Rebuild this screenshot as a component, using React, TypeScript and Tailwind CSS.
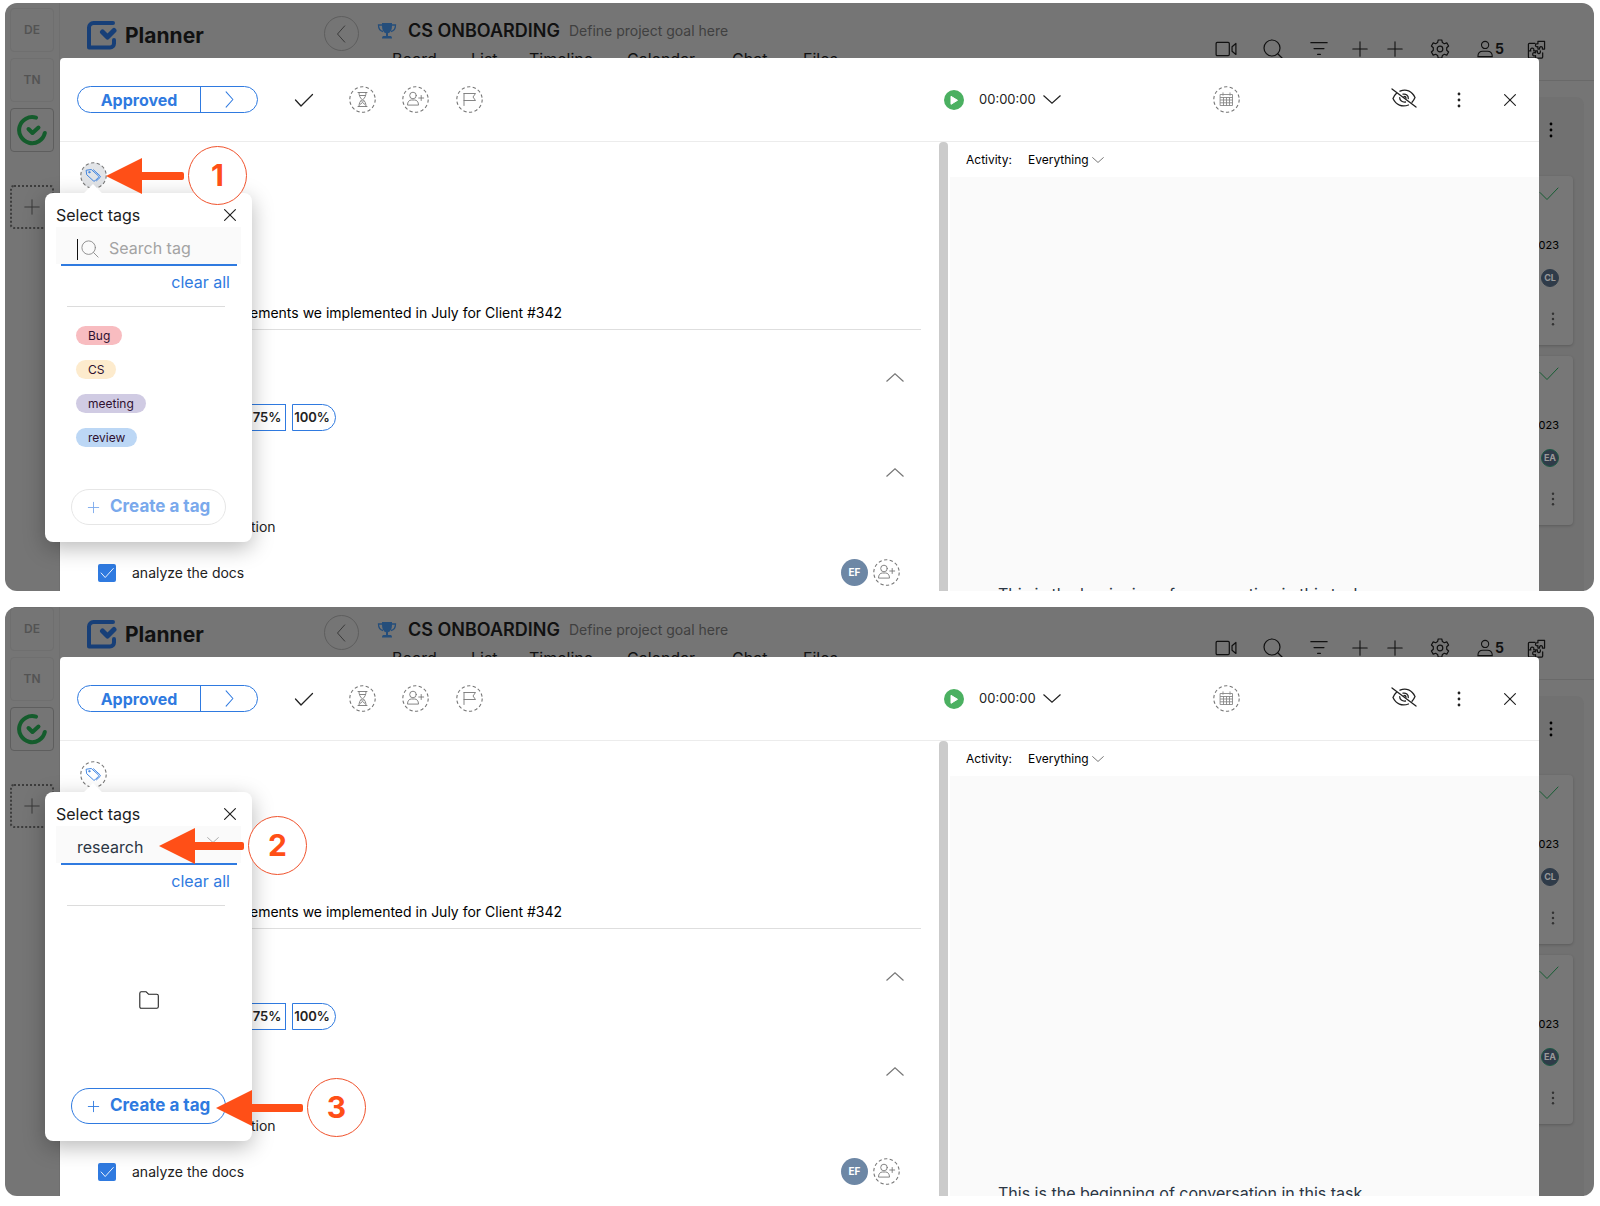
import { useId, useState } from "react";
import type { ReactNode } from "react";

type Tag = { name: string; color: string };

const TAGS: Tag[] = [
  { name: "Bug", color: "bg-[#f8bcc0]" },
  { name: "CS", color: "bg-[#fdebcd]" },
  { name: "meeting", color: "bg-[#d0cbe3]" },
  { name: "review", color: "bg-[#bcd7f5]" },
];

const TABS = [
  { name: "Board", width: "w-[79px]" },
  { name: "List", width: "w-[58px]" },
  { name: "Timeline", width: "w-[98px]" },
  { name: "Calendar", width: "w-[105px]" },
  { name: "Chat", width: "w-[71px]" },
  { name: "Files", width: "w-[50px]" },
];

function Icon({
  size = 20,
  stroke = 1,
  className = "",
  children,
}: {
  size?: number;
  stroke?: number;
  className?: string;
  children: ReactNode;
}) {
  return (
    <svg
      width={size}
      height={size}
      viewBox="0 0 20 20"
      fill="none"
      stroke="currentColor"
      strokeWidth={stroke}
      strokeLinecap="round"
      strokeLinejoin="round"
      className={`shrink-0 ${className}`}
      aria-hidden="true"
    >
      {children}
    </svg>
  );
}

const closePath = <path d="M4 4l12 12M16 4L4 16" />;
const plusPath = <path d="M10 2v16M2 10h16" />;

function Dots({ className }: { className: string }) {
  return (
    <svg width="4" height="16" viewBox="0 0 4 16" fill="currentColor" className={className} aria-hidden="true">
      <circle cx="2" cy="2" r="1.4" />
      <circle cx="2" cy="8" r="1.4" />
      <circle cx="2" cy="14" r="1.4" />
    </svg>
  );
}

function Chevron({
  dir,
  width,
  className = "",
}: {
  dir: "up" | "down";
  width: number;
  className?: string;
}) {
  return (
    <svg
      width={width}
      height={width / 2}
      viewBox="0 0 18 9"
      fill="none"
      stroke="currentColor"
      strokeWidth="1.2"
      className={`shrink-0 ${className}`}
      aria-hidden="true"
    >
      <path d={dir === "up" ? "M.5 8.5L9 .8l8.500 7.700" : "M.5.5L9 8.200 17.500.5"} />
    </svg>
  );
}

function DashedCircle({
  label,
  className = "",
  filled = false,
  children,
}: {
  label: string;
  className?: string;
  filled?: boolean;
  children: ReactNode;
}) {
  return (
    <button type="button" aria-label={label} className={`block size-[27px] shrink-0 ${className}`}>
      <svg width="27" height="27" viewBox="0 0 27 27" fill="none" stroke="currentColor" aria-hidden="true">
        <circle
          cx="13.5"
          cy="13.5"
          r="12.700"
          fill={filled ? "#e2e4e7" : "none"}
          stroke="#777"
          strokeWidth="1.1"
          strokeDasharray="3.300 2.400"
        />
        <g strokeWidth="0.9" strokeLinejoin="round" strokeLinecap="round">
          {children}
        </g>
      </svg>
    </button>
  );
}

const personPlus = (
  <>
    <circle cx="11" cy="9.500" r="3.300" />
    <path d="M5.500 18.700c0-3 1.700-4.700 4-4.700h3c2.300 0 4 1.700 4 4.700z" />
    <path d="M19.200 9.500v5M16.700 12h5" />
  </>
);

function RailBox({ children, active }: { children: ReactNode; active?: boolean }) {
  return (
    <div
      className={`flex h-11 w-11 items-center justify-center rounded border text-xs font-semibold text-[#535353] ${
        active ? "border-[#5e5e5e]" : "border-[#6f6f6f]"
      }`}
    >
      {children}
    </div>
  );
}

function Rail() {
  return (
    <aside className="flex w-[55px] shrink-0 flex-col items-center gap-[6px] border-r border-[#6f6f6f] pt-[5px]">
      <RailBox>DE</RailBox>
      <RailBox>TN</RailBox>
      <RailBox active>
        <svg width="32" height="32" viewBox="0 0 32 32" fill="none" stroke="#145c2c" strokeWidth="4" strokeLinecap="round" strokeLinejoin="round">
          <path d="M20 3.700A13 13 0 1 0 28.800 19" />
          <path d="M12.500 15l4 4 6-5.500" />
        </svg>
      </RailBox>
      <button
        type="button"
        aria-label="Add workspace"
        className="mt-[27px] flex h-11 w-11 items-center justify-center rounded-sm border-2 border-dotted border-[#3d3d3d] text-[#333]"
      >
        <Icon size={18}>{plusPath}</Icon>
      </button>
    </aside>
  );
}

function ProjectHeader() {
  return (
    <header className="flex h-[78px] border-b border-[#696969] text-[#111]">
      <div className="flex w-[257px] items-start gap-2 pt-[17px] pl-[26px]">
        <svg width="31" height="31" viewBox="0 0 31 31" fill="none" stroke="#173f78" strokeWidth="4" strokeLinecap="round" strokeLinejoin="round" className="shrink-0">
          <path d="M27 3H7.500A4.500 4.500 0 0 0 3 7.500V27.500h21a4 4 0 0 0 4-4V20" />
          <path d="M16.500 12l5 5L28 10.500" strokeWidth="5" />
        </svg>
        <span className="text-[21px] leading-8 font-bold">Planner</span>
      </div>
      <button
        type="button"
        aria-label="Back"
        className="mt-[13px] ml-[7px] flex size-[35px] items-center justify-center rounded-full border border-[#5e5e5e] text-[#333]"
      >
        <Icon size={18}>
          <path d="M13 1L5 10l8 9" />
        </Icon>
      </button>
      <div className="ml-4 pt-4">
        <div className="flex items-center">
          <svg width="20" height="18" viewBox="0 0 20 18" fill="#254e7b" className="mr-[11px] ml-[2px]">
            <path d="M5 1h10v3c0 4-1.500 6.500-4 7.300V14h2.500c1 0 1.500 1 1.500 2.500H5C5 15 5.500 14 6.500 14H9v-2.700C6.500 10.500 5 8 5 4z" />
            <path d="M5 3H1.500c0 4 1.700 6 4.500 6.500M15 3h3.500c0 4-1.700 6-4.500 6.500" fill="none" stroke="#254e7b" strokeWidth="1.3" />
          </svg>
          <h1 className="text-lg leading-6 font-semibold whitespace-nowrap">CS ONBOARDING</h1>
          <span className="ml-[9px] text-sm leading-6 text-[#404040]">Define project goal here</span>
        </div>
        <nav className="mt-1 flex pl-[17px]">
          {TABS.map((tab) => (
            <a key={tab.name} href={`#${tab.name}`} className={`text-base leading-6 ${tab.width}`}>
              {tab.name}
            </a>
          ))}
        </nav>
      </div>
      <div className="mt-[35px] mr-12 ml-auto flex h-[22px] items-center">
        <Icon size={22} stroke={1.1} className="mr-[26px]">
          <rect x="1" y="4" width="12" height="12" rx="1" />
          <path d="M15.500 8l3.500-3v10l-3.500-3z" />
        </Icon>
        <Icon size={20} stroke={1.2} className="mr-[27px]">
          <circle cx="9" cy="9" r="8" />
          <path d="M15 15l4.500 4.500" />
        </Icon>
        <Icon size={18} stroke={1.4} className="mr-[23px]">
          <path d="M1 3h18M4.500 9.500h11M8.500 16h3" />
        </Icon>
        <Icon size={18} stroke={1.2} className="mr-[17px]">{plusPath}</Icon>
        <Icon size={18} stroke={1.2} className="mr-[26px]">{plusPath}</Icon>
        <Icon size={20} stroke={1.2} className="mr-[27px]">
          <path d="M8.200 1h3.600l.6 2.600 1.900 1.100 2.500-.8 1.800 3.100-1.900 1.800v2.400l1.900 1.800-1.800 3.100-2.500-.8-1.900 1.100-.6 2.600H8.200l-.6-2.600-1.900-1.100-2.500.8-1.800-3.100 1.900-1.800V8.800L1.400 7l1.800-3.100 2.500.8 1.900-1.100z" />
          <circle cx="10" cy="10" r="2.800" />
        </Icon>
        <Icon size={18} stroke={1.2}>
          <circle cx="9" cy="5.500" r="4" />
          <path d="M1 18.500c0-4 2.200-6 5.500-6h5c3.300 0 5.500 2 5.500 6z" />
        </Icon>
        <span className="mr-[23px] text-sm font-bold">5</span>
        <Icon size={19} stroke={1.3}>
          <path d="M8.500 3.500h-6a1 1 0 0 0-1 1v13.500a1 1 0 0 0 1 1h13a1 1 0 0 0 1-1v-4.500M1.500 11.500h2.500c-.8-2 .3-3 1.500-3s2.300 1 1.500 3h2M9 19v-2.500c-2 .8-3-.3-3-1.500s1-2.300 3-1.500v-2M9 11.500h2c-.5 2 .5 2.800 1.500 2.800s2-1 1.500-2.800" />
          <path d="M11.500 1.500h7v8h-2.300c.4-1.700-.5-2.500-1.500-2.500s-1.800 1-1.400 2.500h-1.800V7c-1.800.5-2.600-.3-2.600-1.400s1-2 2.600-1.500z" />
        </Icon>
      </div>
    </header>
  );
}

function BoardCard({ initials, ring }: { initials: string; ring: string }) {
  return (
    <div className="flex h-[169px] flex-col items-end rounded bg-[#777] pt-2 pr-[14px] shadow-[0_1px_3px_rgba(0,0,0,0.2)]">
      <Icon size={20} className="text-[#175c33]">
        <path d="M1 8.500l7 7L19 4" />
      </Icon>
      <span className="mt-[32px] text-[11px] leading-[18px] text-black">023</span>
      <span
        className={`mt-[15px] flex size-[18px] items-center justify-center rounded-full border bg-[#2f3b49] text-[9px] font-bold text-[#999] ${ring}`}
      >
        {initials}
      </span>
      <Dots className="mt-[25px] mr-1 h-[14px] text-[#333]" />
    </div>
  );
}

function TagPopup({ query }: { query: string }) {
  const id = useId();
  const [value, setValue] = useState(query);
  const found = TAGS.filter((t) => t.name.toLowerCase().includes(value.toLowerCase()));
  const empty = value === "";

  return (
    <div className="absolute top-[190px] left-10 flex h-[349px] w-[207px] flex-col rounded-lg bg-white pt-[10px] shadow-[0_6px_22px_rgba(0,0,0,0.28)]">
      <div className="absolute -top-[6px] left-[41px] size-[14px] rotate-45 bg-white" />
      <div className="relative flex h-6 items-center justify-between pr-[13px] pl-[11px]">
        <span className="text-base text-[#1c1c1c]">Select tags</span>
        <button type="button" aria-label="Close tags" className="text-[#222]">
          <Icon size={18} stroke={1.3}>{closePath}</Icon>
        </button>
      </div>
      <div className="relative mr-[11px] ml-[11px] h-[37px] bg-[#fafafa] pr-1 pl-[5px]">
        <label htmlFor={id} className="sr-only">
          Search tag
        </label>
        <input
          id={id}
          value={value}
          placeholder="Search tag"
          onChange={(e) => setValue(e.target.value)}
          className={`h-[39px] w-full border-b-2 border-[#2f7ae0] bg-transparent pt-1 text-base text-[#2b3644] outline-none placeholder:text-[#a3a3a3] ${
            empty ? "pl-12" : "pl-4"
          }`}
        />
        {empty ? (
          <>
            <span className="absolute top-3 left-[21px] h-[21px] w-px bg-[#111]" />
            <Icon size={18} className="absolute top-[13px] left-[25px] text-[#888]">
              <circle cx="8.500" cy="8.500" r="7.500" />
              <path d="M14 14l5 5" />
            </Icon>
          </>
        ) : (
          <Chevron dir="down" width={12} className="absolute top-[11px] right-[22px] text-[#999]" />
        )}
      </div>
      <button type="button" className="mt-[6px] mr-[22px] self-end text-base leading-6 text-[#2f7ae0]">
        clear all
      </button>
      <hr className="mt-3 mr-[27px] ml-[22px] border-[#dcdcdc]" />
      {found.length > 0 ? (
        <ul className="mt-[19px] flex flex-col items-start gap-[15px] pl-[31px]">
          {found.map((tag) => (
            <li key={tag.name} className={`h-[19px] rounded-full px-3 text-xs leading-[19px] text-[#2e1030] ${tag.color}`}>
              {tag.name}
            </li>
          ))}
        </ul>
      ) : (
        <Icon size={20} stroke={1.1} className="mx-auto mt-[84px] text-[#222]">
          <path d="M.8 3.500c0-1 .4-1.700 1.400-1.700h5l2.300 2.400h8.300c1 0 1.500.5 1.500 1.500v11c0 1-.5 1.500-1.500 1.500H2.200c-1 0-1.400-.5-1.400-1.500z" />
        </Icon>
      )}
      <button
        type="button"
        className={`mt-auto mb-[17px] ml-[26px] flex h-9 w-[155px] items-center gap-[10px] rounded-full border pl-[15px] text-[17px] font-bold whitespace-nowrap ${
          empty ? "border-[#e6e6e6] text-[#7aa9ec]" : "border-[#2f7ae0] text-[#2f7ae0]"
        }`}
      >
        <Icon size={13} stroke={1.4}>{plusPath}</Icon>
        Create a tag
      </button>
    </div>
  );
}

function TaskToolbar() {
  return (
    <div className="flex h-[84px] shrink-0 items-center border-b border-[#ececec] pl-[17px]">
      <div className="flex h-[27px] w-[181px] rounded-full border border-[#2f7ae0] text-[#2f7ae0]">
        <button type="button" className="w-[122px] text-base leading-6 font-bold">
          Approved
        </button>
        <button type="button" aria-label="Next status" className="flex flex-1 items-center justify-center border-l border-[#2f7ae0]">
          <Icon size={17} stroke={1.2}>
            <path d="M6 1l8 9-8 9" />
          </Icon>
        </button>
      </div>
      <button type="button" aria-label="Complete" className="ml-[36px] text-[#222]">
        <Icon size={20} stroke={1.3}>
          <path d="M1.500 10l5.500 6L18.500 4.500" />
        </Icon>
      </button>
      <DashedCircle label="Estimate" className="ml-[35px] text-[#777]">
        <path d="M9 6.500h9M9 20.500h9M10 6.500c0 3.500 1 5 3 7-2 2-3 3.500-3 7M17 6.500c0 3.500-1 5-3 7 2 2 3 3.500 3 7M11 9.500h5M12.500 15h2M11 18.500l2.500-2 2.500 2" />
      </DashedCircle>
      <DashedCircle label="Assign" className="ml-[26px] text-[#777]">{personPlus}</DashedCircle>
      <DashedCircle label="Priority" className="ml-[27px] text-[#777]">
        <path d="M8 7.500v12M8 7.500h11.500l-2.500 3.500 2.500 3.500H8" />
      </DashedCircle>

      <div className="ml-auto flex w-[595px] items-center justify-between pr-[20px]">
        <div className="flex items-center">
          <button type="button" aria-label="Start timer">
            <svg width="20" height="20" viewBox="0 0 20 20">
              <circle cx="10" cy="10" r="10" fill="#4bb061" />
              <path d="M7 6.300l6.500 4L7 14.300z" fill="#fff" stroke="#fff" strokeLinejoin="round" />
            </svg>
          </button>
          <span className="mr-2 ml-[15px] w-[56px] text-[13px] text-[#222]">00:00:00</span>
          <Chevron dir="down" width={18} className="text-[#222]" />
        </div>
        <DashedCircle label="Due date" className="text-[#888]">
          <path d="M7.500 8.500h12v11h-12zM7.500 11.500h12M7.500 14h12M7.500 16.800h12M10.500 11.500v8M13.500 11.500v8M16.500 11.500v8M10 6.800v2.500M17 6.800v2.500" />
        </DashedCircle>
        <div className="flex items-center">
          <button type="button" aria-label="Unwatch" className="mb-1">
            <svg width="26" height="20" viewBox="0 0 26 20" fill="none" stroke="#222" strokeWidth="1.300" strokeLinecap="round">
              <path d="M1 1l24 18" />
              <path d="M9 3.200C15 .4 21 3 24 9.500c-.8 2-1.800 3.500-3 4.800M17.500 17C11 19.500 5 17 2 10.500c.8-2 2-3.800 3.500-5.200" />
              <path d="M12 6.200c3-.6 5.500 1.500 5.300 4.300M14.500 14c-3.300.5-5.800-1.500-5.800-4.300M13 8.500c1 0 2 .7 2 1.800" />
            </svg>
          </button>
          <button type="button" aria-label="More" className="mr-10 ml-10">
            <Dots className="text-[#222]" />
          </button>
          <button type="button" aria-label="Close task" className="text-[#222]">
            <Icon size={18} stroke={1.3}>{closePath}</Icon>
          </button>
        </div>
      </div>
    </div>
  );
}

function TaskDetails({ tagActive }: { tagActive: boolean }) {
  const id = useId();
  return (
    <div className="min-w-0 flex-1 pt-5 pr-[18px]">
      <DashedCircle label="Tags" filled={tagActive} className="ml-5 text-[#2f7ae0]">
        <path d="M6.500 8.200l4.800-.7 7 6.300c.6.6.6 1.200 0 1.700l-3.300 3.300c-.5.500-1.200.500-1.700 0L7 13z" />
        <path d="M13.500 7.800l6.500 6c.6.600.6 1.200 0 1.700l-3.500 3.300" />
        <circle cx="9.300" cy="10.200" r=".7" />
      </DashedCircle>
      <h2 className="mt-[113px] border-b border-[#dedede] pb-[5px] pl-[190px] text-sm leading-[22px] text-black">
        ements we implemented in July for Client #342
      </h2>
      <button type="button" aria-label="Collapse progress" className="mt-[43px] mr-[17px] ml-auto block text-[#777]">
        <Chevron dir="up" width={18} />
      </button>
      <div className="mt-[22px] flex h-[27px] gap-[6px] pl-[180px] text-[13px] font-semibold text-[#222]">
        <button type="button" className="w-[46px] border border-[#2f7ae0] pl-2">
          75%
        </button>
        <button type="button" className="w-11 rounded-r-full border border-[#2f7ae0] pr-1">
          100%
        </button>
      </div>
      <button type="button" aria-label="Collapse checklist" className="mt-[37px] mr-[17px] ml-auto block text-[#777]">
        <Chevron dir="up" width={18} />
      </button>
      <p className="mt-[39px] pl-[191px] text-sm leading-[22px] text-[#222]">tion</p>
      <div className="mt-[21px] flex h-[27px] items-center gap-[5px] pr-[21px] pl-[38px]">
        <span className="relative size-[18px]">
          <input
            id={id}
            type="checkbox"
            defaultChecked
            className="block size-[18px] appearance-none rounded-[2px] bg-[#2f7ae0]"
          />
          <Icon size={18} className="pointer-events-none absolute inset-0 text-white">
            <path d="M3.500 10l4.500 5L17 5" />
          </Icon>
        </span>
        <label htmlFor={id} className="ml-[11px] flex-1 text-sm text-[#222]">
          analyze the docs
        </label>
        <span className="flex size-[27px] items-center justify-center rounded-full bg-[#6d87a5] text-[10px] font-bold text-white">
          EF
        </span>
        <DashedCircle label="Add assignee" className="text-[#777]">{personPlus}</DashedCircle>
      </div>
    </div>
  );
}

function ActivityPane() {
  const id = useId();
  return (
    <div className="flex w-[591px] shrink-0 flex-col">
      <div className="flex h-[35px] items-center pl-[18px] text-xs text-black">
        <label htmlFor={id} className="w-[62px]">
          Activity:
        </label>
        <select id={id} className="w-[64px] appearance-none bg-transparent">
          <option>Everything</option>
        </select>
        <Chevron dir="down" width={12} className="text-[#555]" />
      </div>
      <div className="ml-[2px] flex-1 bg-[#fafafa] pt-[405px] pl-12 text-base leading-6 text-[#2b3644]">
        This is the beginning of conversation in this task.
      </div>
    </div>
  );
}

function Callout({ step, place, length }: { step: number; place: string; length: number }) {
  return (
    <div className={`absolute flex items-center gap-1 ${place}`}>
      <svg width={length} height="38" viewBox={`0 0 ${length} 38`} fill="#ff4f17" aria-hidden="true">
        <path d={`M0 19L36 1v14h${length - 38}q2 0 2 2v4q0 2-2 2H36v14z`} />
      </svg>
      <span className="flex size-[59px] items-center justify-center rounded-full border border-[#f0532d] bg-white text-[30px] font-bold text-[#ff4f17]">
        {step}
      </span>
    </div>
  );
}

function Screen({
  frame,
  query,
  tagActive = false,
  children,
}: {
  frame: string;
  query: string;
  tagActive?: boolean;
  children: ReactNode;
}) {
  return (
    <section className={`overflow-hidden rounded-xl bg-[#757575] ${frame}`}>
      <div className="relative flex h-[594px]">
        <Rail />
        <div className="flex min-w-0 flex-1 flex-col">
          <ProjectHeader />
          <div className="mt-4 mr-[10px] ml-auto w-[300px] flex-1 rounded-t-lg bg-[#717171] pr-[11px]">
            <Dots className="mt-6 mr-5 mb-[37px] ml-auto h-[18px] text-black" />
            <div className="flex flex-col gap-[11px]">
              <BoardCard initials="CL" ring="border-[#2f3b49]" />
              <BoardCard initials="EA" ring="border-[#1d5a45]" />
            </div>
          </div>
        </div>

        <div className="absolute inset-x-[55px] top-[55px] bottom-0 flex flex-col rounded-t bg-white">
          <TaskToolbar />
          <div className="flex flex-1">
            <TaskDetails tagActive={tagActive} />
            <div className="w-[9px] shrink-0 rounded-t bg-[#cbcbcb]" />
            <ActivityPane />
          </div>
        </div>

        <TagPopup query={query} />
        {children}
      </div>
    </section>
  );
}

export default function App() {
  return (
    <main className="flex min-h-screen flex-col gap-4 bg-white pt-[3px] pr-[6px] pl-[5px] font-['Inter',sans-serif]">
      <Screen frame="h-[588px]" query="" tagActive>
        <Callout step={1} place="top-[143px] left-[101px]" length={78} />
      </Screen>
      <Screen frame="h-[589px] *:-mt-[5px]" query="research">
        <Callout step={2} place="top-[214px] left-[154px]" length={85} />
        <Callout step={3} place="top-[476px] left-[211px]" length={87} />
      </Screen>
    </main>
  );
}
